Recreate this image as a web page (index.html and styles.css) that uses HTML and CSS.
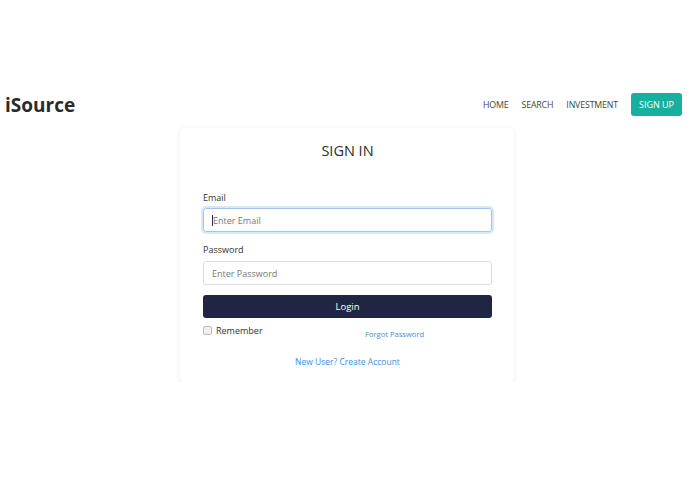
FILE: index.html
```html
<!DOCTYPE html>
<html>
<head>
<meta charset="utf-8">
<link rel="stylesheet" href="styles.css">
</head>
<body>
<header class="nav">
  <div class="brand">iSource</div>
  <nav class="links">
    <a class="link">HOME</a>
    <a class="link">SEARCH</a>
    <a class="link">INVESTMENT</a>
    <a class="signup">SIGN UP</a>
  </nav>
</header>
<main class="main">
  <section class="card">
    <h1 class="title">SIGN IN</h1>
    <div class="form">
      <label class="label">Email</label>
      <div class="input focused"><span class="caret"></span>Enter Email</div>
      <label class="label pw">Password</label>
      <div class="input pw-input">Enter Password</div>
      <button class="login">Login</button>
      <div class="row">
        <label class="remember"><span class="check"></span>Remember</label>
        <a class="forgot">Forgot Password</a>
      </div>
      <a class="create">New User? Create Account</a>
    </div>
  </section>
</main>
</body>
</html>
```
FILE: styles.css
```css
* { box-sizing: border-box; }
html, body { margin: 0; padding: 0; background: #fff; }
body { font-family: "Open Sans", "Noto Sans", sans-serif; color: #333; }
.nav {
  margin-top: 93px;
  height: 23px;
  display: flex;
  align-items: center;
  justify-content: space-between;
  padding: 0 13px 0 5px;
}
.brand { font-size: 19px; font-weight: 700; color: #2a2a2a; }
.links { display: flex; align-items: center; }
.link { font-size: 8.8px; color: #444; margin-right: 13px; letter-spacing: -0.15px; }
.signup {
  background: #17b0a0;
  color: #fff;
  font-size: 9px;
  height: 23px;
  width: 51px;
  display: flex;
  align-items: center;
  justify-content: center;
  border-radius: 3px;
}
.main { display: flex; justify-content: center; }
.card {
  margin-top: 12px;
  margin-left: -1px;
  width: 334px;
  height: 254px;
  background: #fff;
  border-radius: 5px;
  box-shadow: 0 1px 6px rgba(0,0,0,0.07);
  padding: 13px 22px 0 23px;
}
.title { margin: 0; text-align: center; font-weight: 400; font-size: 14.5px; color: #2d2d2d; line-height: 20px; }
.form { display: flex; flex-direction: column; margin-top: 31px; }
.label { font-size: 9px; color: #333; line-height: 12px; }
.pw { margin-top: 12px; }
.input {
  margin-top: 4px;
  height: 24px;
  border: 1px solid #d9dde2;
  border-radius: 3px;
  font-size: 9px;
  color: #777;
  padding-left: 8px;
  display: flex;
  align-items: center;
}
.pw-input { margin-top: 5px; }
.input.focused { border-color: #9fc6ea; box-shadow: 0 0 0 2px rgba(140,190,240,0.35); }
.caret { width: 1px; height: 11px; background: #333; }
.login {
  margin-top: 10px;
  height: 23px;
  border: none;
  border-radius: 3px;
  background: #1f2543;
  color: #fff;
  font-family: inherit;
  font-size: 9.5px;
  padding: 0;
}
.row { display: flex; align-items: flex-start; margin-top: 6px; height: 20px; }
.remember { display: flex; align-items: center; font-size: 9px; color: #333; width: 162px; }
.check {
  width: 9px; height: 9px; border: 1px solid #bbb; border-radius: 2px;
  background: #f0f0f0; margin-right: 4px;
}
.forgot { font-size: 7.6px; color: #3d8fd9; margin-top: 5px; }
.create { align-self: center; font-size: 8.5px; color: #3d8fd9; margin-top: 12px; }
```
